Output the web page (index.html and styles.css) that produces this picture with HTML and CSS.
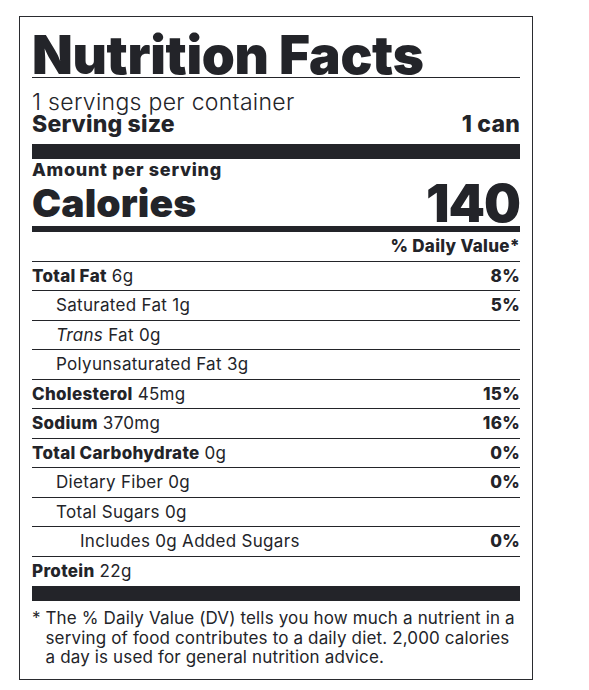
FILE: index.html
```html
<!DOCTYPE html>
<html>
<head>
<meta charset="utf-8">
<title>Nutrition Facts</title>
<link rel="stylesheet" href="styles.css">
</head>
<body>

<section class="label">
  <h1 class="title">Nutrition Facts</h1>
  <div class="servings">1 servings per container</div>
  <div class="serving-size"><span>Serving size</span><span>1 can</span></div>

  <div class="bar thick"></div>

  <div class="amount">Amount per serving</div>
  <div class="calories"><span class="cal-label">Calories</span><span class="cal-num">140</span></div>

  <div class="bar medium"></div>

  <div class="dv-head">% Daily Value*</div>

  <div class="row"><span><b>Total Fat</b> 6g</span><b>8%</b></div>
  <div class="row sub"><span>Saturated Fat 1g</span><b>5%</b></div>
  <div class="row sub"><span><i>Trans</i> Fat 0g</span></div>
  <div class="row sub"><span>Polyunsaturated Fat 3g</span></div>
  <div class="row"><span><b>Cholesterol</b> 45mg</span><b>15%</b></div>
  <div class="row"><span><b>Sodium</b> 370mg</span><b>16%</b></div>
  <div class="row"><span><b>Total Carbohydrate</b> 0g</span><b>0%</b></div>
  <div class="row sub"><span>Dietary Fiber 0g</span><b>0%</b></div>
  <div class="row sub"><span>Total Sugars 0g</span></div>
  <div class="row sub2"><span>Includes 0g Added Sugars</span><b>0%</b></div>
  <div class="row last"><span><b>Protein</b> 22g</span></div>

  <div class="bar thick bottom"></div>

  <p class="footnote"><span class="star">*</span><span>The % Daily Value (DV) tells you how much a nutrient in a serving of food contributes to a daily diet. 2,000 calories a day is used for general nutrition advice.</span></p>
</section>

</body>
</html>
```

FILE: styles.css
```css
body {
	margin: 16px 0 0 19px;
	background: #FFFFFF;
	font-family: 'Inter', 'Liberation Sans', sans-serif;
	color: #232429;
}
.label {
	box-sizing: border-box;
	width: 514px;
	height: 664px;
	border: 1px solid #2a2b2f;
	padding: 0 12px;
}
.title {
	margin: 0;
	padding-top: 17px;
	font-size: 53px;
	line-height: 43px;
	font-weight: 900;
	letter-spacing: -0.3px;
	border-bottom: 1px solid #232429;
}
.servings {
	margin-top: 13px;
	font-size: 23px;
	font-weight: 300;
	line-height: 22px;
	letter-spacing: 0.3px;
}
.serving-size {
	display: flex;
	justify-content: space-between;
	font-size: 23px;
	font-weight: 800;
	line-height: 22px;
	letter-spacing: 0.2px;
}
.bar {
	background: #232429;
}
.bar.thick {
	height: 14.5px;
	margin-top: 9px;
}
.bar.bottom {
	height: 15px;
	margin-top: 0;
}
.bar.medium {
	height: 6px;
}
.amount {
	margin-top: 1px;
	font-size: 18px;
	font-weight: 800;
	line-height: 20px;
	letter-spacing: 0.7px;
}
.calories {
	display: flex;
	justify-content: space-between;
	align-items: flex-end;
	height: 46px;
	font-weight: 900;
}
.cal-label {
	font-size: 39px;
	line-height: 46px;
	letter-spacing: 0.1px;
}
.cal-num {
	font-size: 52px;
	line-height: 43.5px;
	letter-spacing: -1px;
}
.dv-head {
	text-align: right;
	height: 29px;
	font-size: 17px;
	font-weight: 800;
	line-height: 29px;
	letter-spacing: 0.3px;
	border-bottom: 1px solid #232429;
}
.row {
	display: flex;
	justify-content: space-between;
	align-items: center;
	height: 28.5px;
	font-size: 17px;
	font-weight: 400;
	letter-spacing: 0.3px;
	border-bottom: 1px solid #232429;
}
.row b {
	font-weight: 800;
}
.row.sub {
	padding-left: 24px;
}
.row.sub2 {
	padding-left: 48px;
}
.row.last {
	height: 29px;
	border-bottom: none;
}
.footnote {
	display: flex;
	margin: 8.5px 0 0;
	font-size: 17px;
	line-height: 19.5px;
	letter-spacing: 0.15px;
}
.star {
	flex: 0 0 13.5px;
}
```
